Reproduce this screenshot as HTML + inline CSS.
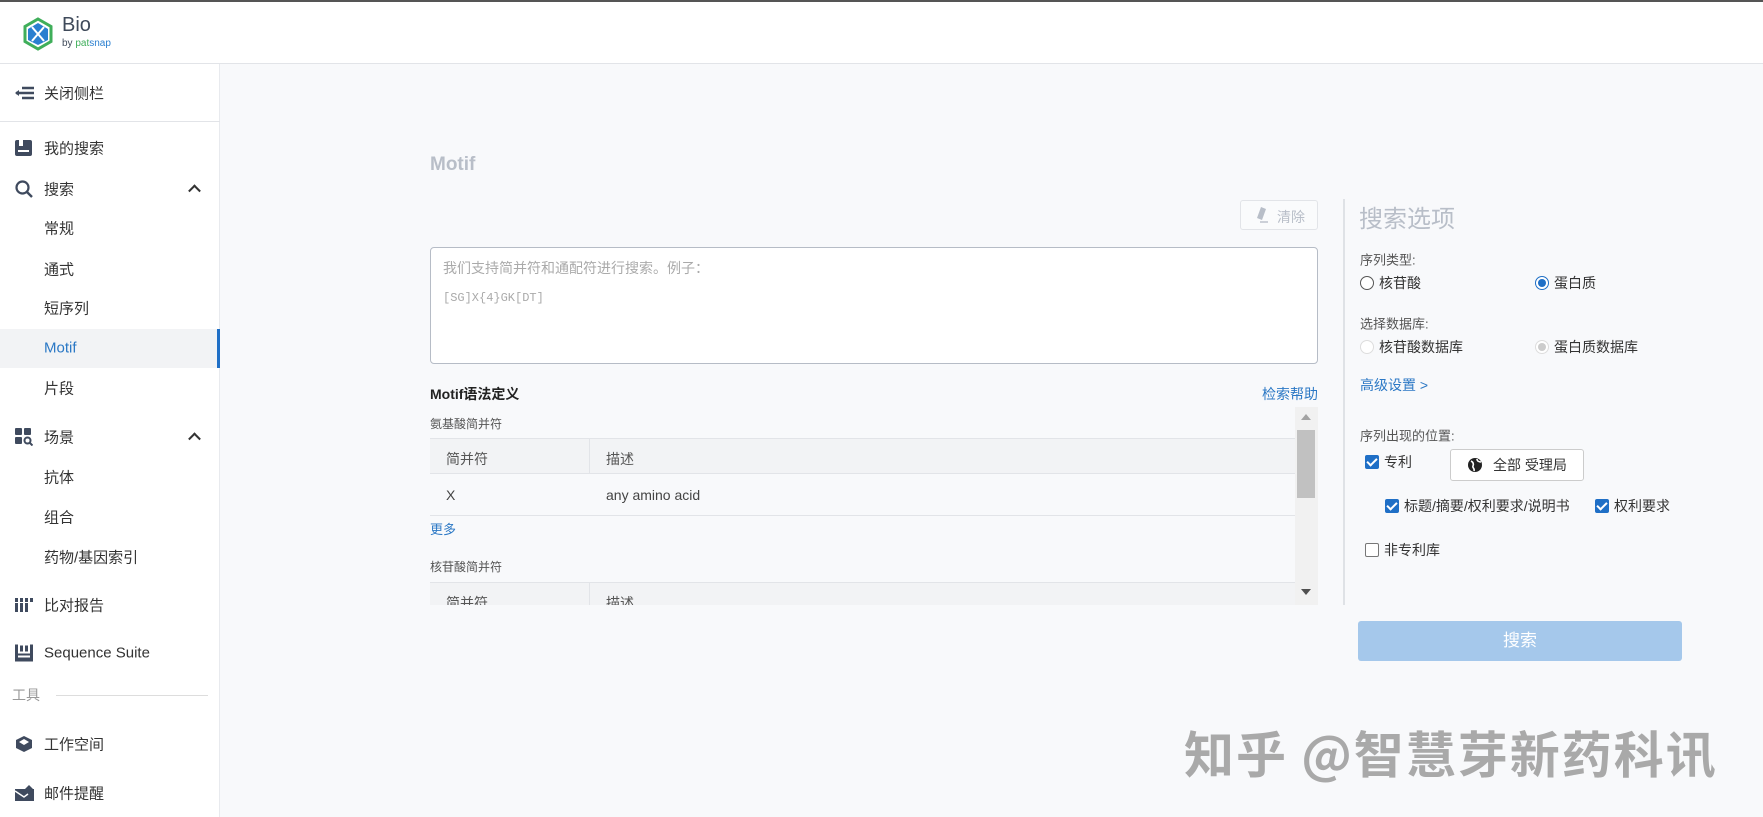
<!DOCTYPE html>
<html><head><meta charset="utf-8"><style>
*{box-sizing:border-box;margin:0;padding:0}
body{width:1763px;height:817px;overflow:hidden;background:#f8f9fb;font-family:"Liberation Sans","Noto Sans CJK SC",sans-serif;color:#333;position:relative}
.a{position:absolute;white-space:nowrap}
#top{position:absolute;left:0;top:0;width:1763px;height:64px;background:#fff;border-top:2px solid #555;border-bottom:1px solid #e2e4e8}
#side{position:absolute;left:0;top:64px;width:220px;height:753px;background:#fff;border-right:1px solid #e8eaee}
.si{position:absolute;left:44px;font-size:15px;color:#333;transform:translateY(-50%)}
.ic{position:absolute;left:15px;transform:translateY(-50%)}
.chev{position:absolute;left:190px;width:9px;height:9px;border-left:2px solid #333;border-top:2px solid #333;transform:translateY(-30%) rotate(45deg)}
.cb{position:absolute;width:14px;height:14px;border-radius:2px;background:#1f6fc6;transform:translateY(-50%)}
.cb:after{content:"";position:absolute;left:4px;top:1px;width:4px;height:8px;border-right:2px solid #fff;border-bottom:2px solid #fff;transform:rotate(45deg)}
.lbl{font-size:14px;color:#333;transform:translateY(-50%)}
</style></head><body>
<div id="top">
 <svg class="a" style="left:23px;top:15px" width="30" height="34" viewBox="0 0 30 34"><polygon points="15,2 28,9.5 28,24.5 15,32 2,24.5 2,9.5" fill="#fff" stroke="#3fae5a" stroke-width="3"/><polygon points="15,6 25,12 25,23 15,28 5,23 5,12" fill="#2a7fd0"/><path d="M9 24 C14 18,16 16,21 10 M9 10 C14 16,16 18,21 24" stroke="#fff" stroke-width="2" fill="none"/></svg>
 <div class="a" style="left:62px;top:12px;font-size:20px;color:#3f4a5a">Bio</div>
 <div class="a" style="left:62px;top:36px;font-size:10px;color:#3f4a5a">by <span style="color:#3fae5a">pat</span><span style="color:#2a7fd0">snap</span></div>
</div>
<div id="side">
 <svg class="ic" style="top:29px" width="20" height="14" viewBox="0 0 20 14"><path d="M1 7h18M7 2h12M7 12h12" stroke="#3f4a5e" stroke-width="2.4"/><path d="M0 7l4-3v6z" fill="#3f4a5e"/></svg>
 <div class="si" style="top:29px">关闭侧栏</div>
 <div class="a" style="left:0;top:57px;width:220px;border-top:1px solid #e2e4e8"></div>
 <svg class="ic" style="top:84px" width="17" height="16"><rect x="0" y="0" width="17" height="16" rx="2" fill="#3f4a5e"/><rect x="3" y="10" width="11" height="2" fill="#fff"/><rect x="4" y="0" width="4" height="6" fill="#fff"/></svg>
 <div class="si" style="top:84px">我的搜索</div>
 <svg class="ic" style="top:125px" width="18" height="18"><circle cx="7.5" cy="7.5" r="6" stroke="#3f4a5e" stroke-width="2.2" fill="none"/><path d="M12 12l5 5" stroke="#3f4a5e" stroke-width="2.4"/></svg>
 <div class="si" style="top:125px">搜索</div><div class="chev" style="top:125px"></div>
 <div class="si" style="top:164px">常规</div>
 <div class="si" style="top:205px">通式</div>
 <div class="si" style="top:244px">短序列</div>
 <div class="a" style="left:0;top:265px;width:220px;height:39px;background:#f2f3f5;border-right:3px solid #1f6fc6"></div>
 <div class="si" style="top:284px;color:#2b78c5">Motif</div>
 <div class="si" style="top:324px">片段</div>
 <svg class="ic" style="top:373px" width="18" height="18"><rect x="0" y="0" width="7" height="7" rx="1" fill="#3f4a5e"/><rect x="9" y="0" width="7" height="7" rx="1" fill="#3f4a5e"/><rect x="0" y="9" width="7" height="7" rx="1" fill="#3f4a5e"/><circle cx="12.5" cy="12.5" r="3" stroke="#3f4a5e" stroke-width="2" fill="none"/><path d="M14.5 14.5l3 3" stroke="#3f4a5e" stroke-width="2"/></svg>
 <div class="si" style="top:373px">场景</div><div class="chev" style="top:373px"></div>
 <div class="si" style="top:413px">抗体</div>
 <div class="si" style="top:453px">组合</div>
 <div class="si" style="top:493px">药物/基因索引</div>
 <svg class="ic" style="top:541px" width="19" height="14"><g fill="#3f4a5e"><rect x="0" y="0" width="3" height="4"/><rect x="5" y="0" width="3" height="4"/><rect x="10" y="0" width="3" height="4"/><rect x="15" y="0" width="3" height="4"/><rect x="0" y="5" width="3" height="9"/><rect x="5" y="5" width="3" height="9"/><rect x="10" y="5" width="3" height="9"/></g></svg>
 <div class="si" style="top:541px">比对报告</div>
 <svg class="ic" style="top:589px" width="18" height="17"><g fill="#3f4a5e"><rect x="0" y="9" width="18" height="8"/><rect x="0" y="0" width="3" height="9"/><rect x="15" y="0" width="3" height="9"/><rect x="5" y="1" width="3" height="6"/><rect x="10" y="1" width="3" height="6"/></g><rect x="3" y="11" width="12" height="2" fill="#fff"/></svg>
 <div class="si" style="top:589px">Sequence Suite</div>
 <div class="a" style="left:12px;top:631px;font-size:14px;color:#999;transform:translateY(-50%)">工具</div>
 <div class="a" style="left:56px;top:631px;width:152px;border-top:1px solid #ddd"></div>
 <svg class="ic" style="top:680px" width="18" height="18"><polygon points="9,1 17,5 17,13 9,17 1,13 1,5" fill="#3f4a5e"/><polygon points="9,4 14,7 9,10 4,7" fill="#fff"/></svg>
 <div class="si" style="top:680px">工作空间</div>
 <svg class="ic" style="top:729px" width="19" height="16"><rect x="0" y="4" width="19" height="12" fill="#3f4a5e"/><path d="M0 6l9 6 4-3" stroke="#fff" stroke-width="1.5" fill="none"/><polygon points="14,0 19,5 9,5" fill="#3f4a5e"/></svg>
 <div class="si" style="top:729px">邮件提醒</div>
</div>

<div class="a" style="left:430px;top:154px;font-size:19px;font-weight:bold;color:#b8bec8">Motif</div>
<div class="a" style="left:1240px;top:200px;width:78px;height:30px;border:1px solid #e2e4e8;border-radius:3px;background:#fafbfc;font-size:14px;color:#b8bec8;padding:6px 0 0 36px">清除</div>
<svg class="a" style="left:1256px;top:206px" width="14" height="18"><path d="M5 1l5 2-4 11-5-2z" fill="#b8bec8"/><path d="M4 16h8" stroke="#b8bec8" stroke-width="1.4"/></svg>
<div class="a" style="left:430px;top:247px;width:888px;height:117px;border:1px solid #b6bcc6;border-radius:4px;background:#fff"></div>
<div class="a" style="left:443px;top:258px;font-size:14px;color:#aaa">我们支持简并符和通配符进行搜索。例子：</div>
<div class="a" style="left:443px;top:291px;font-size:12px;color:#aaa;font-family:'Liberation Mono',monospace">[SG]X{4}GK[DT]</div>
<div class="a" style="left:430px;top:384px;font-size:14px;font-weight:bold;color:#222">Motif语法定义</div>
<div class="a" style="left:1262px;top:384px;font-size:14px;color:#2b78c5">检索帮助</div>
<div class="a" style="left:430px;top:415px;font-size:12px;color:#555">氨基酸简并符</div>
<div class="a" style="left:430px;top:438px;width:865px;height:36px;background:#f2f3f5;border-top:1px solid #e2e4e8;border-bottom:1px solid #e2e4e8"></div>
<div class="a" style="left:589px;top:438px;height:36px;border-left:1px solid #e2e4e8"></div>
<div class="a" style="left:446px;top:449px;font-size:14px;color:#555">简并符</div>
<div class="a" style="left:606px;top:449px;font-size:14px;color:#555">描述</div>
<div class="a" style="left:430px;top:515px;width:865px;border-top:1px solid #e2e4e8"></div>
<div class="a" style="left:446px;top:487px;font-size:14px;color:#444">X</div>
<div class="a" style="left:606px;top:487px;font-size:14px;color:#444">any amino acid</div>
<div class="a" style="left:430px;top:519px;font-size:13px;color:#2b78c5">更多</div>
<div class="a" style="left:430px;top:558px;font-size:12px;color:#555">核苷酸简并符</div>
<div class="a" style="left:430px;top:582px;width:865px;height:23px;background:#f2f3f5;border-top:1px solid #e2e4e8;overflow:hidden"></div>
<div class="a" style="left:589px;top:582px;height:23px;border-left:1px solid #e2e4e8"></div>
<div class="a" style="left:446px;top:593px;font-size:14px;color:#555;height:12px;overflow:hidden">简并符</div>
<div class="a" style="left:606px;top:593px;font-size:14px;color:#555;height:12px;overflow:hidden">描述</div>
<div class="a" style="left:1295px;top:407px;width:23px;height:198px;background:#f1f1f1"></div>
<div class="a" style="left:1297px;top:430px;width:18px;height:68px;background:#c1c1c1"></div>
<div class="a" style="left:1301px;top:414px;border:5px solid transparent;border-bottom:6px solid #a3a3a3;border-top:0"></div>
<div class="a" style="left:1301px;top:589px;border:5px solid transparent;border-top:6px solid #505050;border-bottom:0"></div>

<div class="a" style="left:1343px;top:199px;height:406px;border-left:2px solid #dfe2e6"></div>
<div class="a" style="left:1359px;top:199px;font-size:24px;color:#b8bec8">搜索选项</div>
<div class="a lbl" style="left:1360px;top:259px;font-size:13px;color:#555">序列类型:</div>
<div class="a" style="left:1360px;top:276px;width:14px;height:14px;border:1px solid #555;border-radius:50%;background:#fff"></div>
<div class="a lbl" style="left:1379px;top:283px">核苷酸</div>
<div class="a" style="left:1535px;top:276px;width:14px;height:14px;border:1px solid #1f6fc6;border-radius:50%;background:#fff"><div style="margin:2px;width:8px;height:8px;border-radius:50%;background:#1f6fc6"></div></div>
<div class="a lbl" style="left:1554px;top:283px">蛋白质</div>
<div class="a lbl" style="left:1360px;top:323px;font-size:13px;color:#555">选择数据库:</div>
<div class="a" style="left:1360px;top:340px;width:14px;height:14px;border:1px solid #ddd;border-radius:50%;background:#fff"></div>
<div class="a lbl" style="left:1379px;top:347px">核苷酸数据库</div>
<div class="a" style="left:1535px;top:340px;width:14px;height:14px;border:1px solid #ddd;border-radius:50%;background:#fff"><div style="margin:2px;width:8px;height:8px;border-radius:50%;background:#ccc"></div></div>
<div class="a lbl" style="left:1554px;top:347px">蛋白质数据库</div>
<div class="a lbl" style="left:1360px;top:385px;color:#2b78c5">高级设置 &gt;</div>
<div class="a lbl" style="left:1360px;top:435px;font-size:13px;color:#555">序列出现的位置:</div>
<div class="cb" style="left:1365px;top:462px"></div>
<div class="a lbl" style="left:1384px;top:462px">专利</div>
<div class="a" style="left:1450px;top:449px;width:134px;height:32px;border:1px solid #ccc;border-radius:3px;background:#fff"></div>
<svg class="a" style="left:1467px;top:457px" width="16" height="16"><circle cx="8" cy="8" r="7" fill="#222"/><path d="M4 4c2 1 3 3 2 5s2 2 1 5M10 2c0 2 2 3 4 3" stroke="#fff" stroke-width="1.6" fill="none"/></svg>
<div class="a lbl" style="left:1493px;top:465px">全部 受理局</div>
<div class="cb" style="left:1385px;top:506px"></div>
<div class="a lbl" style="left:1404px;top:506px">标题/摘要/权利要求/说明书</div>
<div class="cb" style="left:1595px;top:506px"></div>
<div class="a lbl" style="left:1614px;top:506px">权利要求</div>
<div class="a" style="left:1365px;top:543px;width:14px;height:14px;border:1px solid #777;border-radius:2px;background:#fff"></div>
<div class="a lbl" style="left:1384px;top:550px">非专利库</div>
<div class="a" style="left:1358px;top:621px;width:324px;height:40px;background:#a5c8eb;border-radius:3px;color:#fff;font-size:17px;text-align:center;line-height:40px">搜索</div>

<div class="a" style="left:1184px;top:716px;font-size:50px;font-weight:bold;color:#a9a9a9;letter-spacing:2px;font-family:'Noto Sans CJK SC',sans-serif">知乎 @智慧芽新药科讯</div>
</body></html>
